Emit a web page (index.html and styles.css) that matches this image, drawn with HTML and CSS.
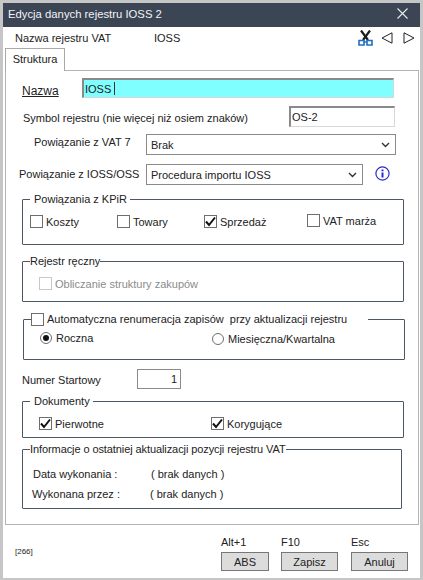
FILE: index.html
```html
<!DOCTYPE html>
<html lang="pl">
<head>
    <meta charset="UTF-8">
    <title>Edycja danych rejestru IOSS 2</title>
    <link rel="stylesheet" href="styles.css">
</head>
<body>
    <div class="window">
        <div class="titleBar">
            <span>Edycja danych rejestru IOSS 2</span>
            <svg class="closeIcon" width="11" height="11" viewBox="0 0 11 11"><path d="M0.5 0.5L10.5 10.5M10.5 0.5L0.5 10.5" stroke="#e8eaee" stroke-width="1.1" fill="none"/></svg>
        </div>
        <div class="toolBar">
            <span class="toolName">Nazwa rejestru VAT</span>
            <span class="toolValue">IOSS</span>
            <svg class="toolIcon" width="15" height="16" viewBox="0 0 15 16"><path d="M3 0.5L10 10M12 0.5L5 10" stroke="#1c1c1c" stroke-width="2.2" fill="none"/><path d="M1 10.5h5v4.5h-5zM9 10.5h5v4.5h-5z" stroke="#1f6fc0" stroke-width="1.6" fill="none"/><path d="M6 12h3" stroke="#1f6fc0" stroke-width="1.4"/></svg>
            <svg class="arrowLeft" width="12" height="12" viewBox="0 0 12 12"><path d="M11 0.8V11.2L1 6Z" stroke="#222" fill="none"/></svg>
            <svg class="arrowRight" width="12" height="12" viewBox="0 0 12 12"><path d="M1 0.8V11.2L11 6Z" stroke="#222" fill="none"/></svg>
        </div>
        <div class="tabs"><span class="tab">Struktura</span></div>
        <div class="panel">
            <div class="row rowName">
                <span class="nameLabel">Nazwa</span>
                <div class="field fieldName">IOSS <i class="caret"></i></div>
            </div>
            <div class="row rowSymbol">
                <span class="symbolLabel">Symbol rejestru (nie więcej niż osiem znaków)</span>
                <div class="field fieldSymbol">OS-2</div>
            </div>
            <div class="row rowVat">
                <span class="vatLabel">Powiązanie z VAT 7</span>
                <div class="select selectVat">Brak
                    <svg width="9" height="6" viewBox="0 0 9 6"><path d="M1 1L4.5 4.5L8 1" stroke="#333" stroke-width="1.4" fill="none"/></svg>
                </div>
            </div>
            <div class="row rowIoss">
                <span class="iossLabel">Powiązanie z IOSS/OSS</span>
                <div class="select selectIoss">Procedura importu IOSS
                    <svg width="9" height="6" viewBox="0 0 9 6"><path d="M1 1L4.5 4.5L8 1" stroke="#333" stroke-width="1.4" fill="none"/></svg>
                </div>
                <svg class="infoIcon" width="15" height="15" viewBox="0 0 15 15"><circle cx="7.5" cy="7.5" r="6.6" stroke="#2a2ad0" stroke-width="1.2" fill="#fff"/><path d="M7.5 3.4v1.8M7.5 6.4v5" stroke="#2a2ad0" stroke-width="2" fill="none"/></svg>
            </div>

            <fieldset class="group groupKpir">
                <legend class="legendGap">Powiązania z KPiR</legend>
                <div class="checks">
                    <label class="check checkKoszty"><i class="box"></i>Koszty</label>
                    <label class="check checkTowary"><i class="box"></i>Towary</label>
                    <label class="check checkSprzedaz"><i class="box">
                        <svg width="11" height="11" viewBox="0 0 11 11"><path d="M1 5.5L4 9L10 1.5" stroke="#111" stroke-width="2" fill="none"/></svg>
                    </i>Sprzedaż</label>
                    <label class="check checkMarza"><i class="box"></i>VAT marża</label>
                </div>
            </fieldset>

            <fieldset class="group groupManual">
                <legend class="legendTight">Rejestr ręczny</legend>
                <label class="check disabled"><i class="box"></i>Obliczanie struktury zakupów</label>
            </fieldset>

            <fieldset class="group groupAuto">
                <legend class="legendAuto">
                    <label class="check"><i class="box"></i>Automatyczna renumeracja zapisów&nbsp; przy aktualizacji rejestru</label>
                </legend>
                <div class="radios">
                    <label class="check radioYear"><i class="radio on"></i>Roczna</label>
                    <label class="check radioMonth"><i class="radio"></i>Miesięczna/Kwartalna</label>
                </div>
            </fieldset>

            <div class="row rowStart">
                <span class="startLabel">Numer Startowy</span>
                <div class="field fieldStart">1</div>
            </div>

            <fieldset class="group groupDocs">
                <legend class="legendGap">Dokumenty</legend>
                <div class="docs">
                    <label class="check checkFirst"><i class="box">
                        <svg width="11" height="11" viewBox="0 0 11 11"><path d="M1 5.5L4 9L10 1.5" stroke="#111" stroke-width="2" fill="none"/></svg>
                    </i>Pierwotne</label>
                    <label class="check"><i class="box">
                        <svg width="11" height="11" viewBox="0 0 11 11"><path d="M1 5.5L4 9L10 1.5" stroke="#111" stroke-width="2" fill="none"/></svg>
                    </i>Korygujące</label>
                </div>
            </fieldset>

            <fieldset class="group groupInfo">
                <legend class="legendTight">Informacje o ostatniej aktualizacji pozycji rejestru VAT</legend>
                <div class="infoRow infoDate"><span class="infoKey">Data wykonania :</span><span>( brak danych )</span></div>
                <div class="infoRow infoUser"><span class="infoKey">Wykonana przez :</span><span>( brak danych )</span></div>
            </fieldset>
        </div>
        <div class="footer">
            <span class="code">[266]</span>
            <div class="action actionAbs"><span>Alt+1</span><button>ABS</button></div>
            <div class="action actionSave"><span>F10</span><button>Zapisz</button></div>
            <div class="action actionCancel"><span>Esc</span><button>Anuluj</button></div>
        </div>
    </div>
</body>
</html>
```

FILE: styles.css
```css
* {
    margin: 0;
    padding: 0;
    box-sizing: border-box;
}

html, body {
    width: 423px;
    height: 580px;
    overflow: hidden;
    background: #c6c6c6;
}

body {
    font-family: "Liberation Sans", Arial, sans-serif;
    font-size: 11px;
    color: #222;
}

i {
    font-style: normal;
}

.window {
    width: 417px;
    height: 575px;
    margin: 3px 0 0 3px;
    background: #fff;
    display: flex;
    flex-direction: column;
}

.titleBar {
    height: 24px;
    flex: none;
    display: flex;
    align-items: center;
    justify-content: space-between;
    padding: 0 12px 3px 5px;
    background: #3b4554;
    color: #f2f4f6;
    font-size: 11.3px;
}

.toolBar {
    height: 21px;
    flex: none;
    display: flex;
    align-items: center;
    padding-left: 12px;
}

.toolName {
    width: 139px;
}

.toolValue {
    width: 204px;
}

.arrowLeft {
    margin-left: 8px;
}

.arrowRight {
    margin-left: 10px;
}

.tabs {
    height: 22px;
    flex: none;
    margin-left: 2px;
    display: flex;
}

.tab {
    width: 60px;
    height: 23px;
    padding-top: 4px;
    text-align: center;
    background: #fff;
    border: 1px solid #a9a9a9;
    border-bottom: 0;
    position: relative;
    z-index: 1;
}

.panel {
    height: 455px;
    flex: none;
    margin: 0 1px 0 2px;
    padding-top: 7px;
    border: 1px solid #b4b4b4;
}

.row {
    display: flex;
    align-items: center;
}

.field, .select {
    display: flex;
    align-items: center;
    border: 1px solid #8a8a8a;
    background: #fff;
}

.rowName {
    height: 20px;
    padding-left: 16px;
}

.nameLabel {
    width: 60px;
    margin-top: 5px;
    font-size: 12px;
    text-decoration: underline;
}

.fieldName {
    width: 312px;
    height: 20px;
    padding-left: 1px;
    background: #7fffff;
    border-color: #8a8a8a #d8d8d8 #d8d8d8 #8a8a8a;
    border-width: 2px 1px 1px 2px;
}

.caret {
    display: inline-block;
    width: 1px;
    height: 13px;
    margin-left: 3px;
    background: #333;
}

.rowSymbol {
    height: 21px;
    margin-top: 8px;
    padding-left: 17px;
}

.symbolLabel {
    width: 266px;
    margin-top: 2px;
}

.fieldSymbol {
    width: 106px;
    height: 21px;
    padding-left: 1px;
    border-color: #8a8a8a #d8d8d8 #d8d8d8 #8a8a8a;
    border-width: 2px 1px 1px 2px;
}

.rowVat {
    height: 21px;
    margin-top: 7px;
    padding-left: 28px;
}

.vatLabel {
    width: 112px;
    margin-top: -5px;
}

.select {
    height: 21px;
    justify-content: space-between;
    padding: 0 5px 0 4px;
}

.selectVat {
    width: 250px;
}

.rowIoss {
    height: 21px;
    margin-top: 9px;
    padding-left: 13px;
}

.iossLabel {
    width: 127px;
    margin-top: -1px;
}

.selectIoss {
    width: 217px;
}

.infoIcon {
    margin: -3px 0 0 12px;
}

.group {
    display: block;
    margin-left: 16px;
    width: 382px;
    border: 1px solid #4d5663;
    border-radius: 1px;
}

.group legend {
    margin-left: 7px;
    line-height: 14px;
}

.legendGap {
    padding: 0 3px 0 4px;
}

.legendTight {
    padding: 0;
}

.legendAuto {
    padding: 0 21px 0 0;
    margin-left: 10px;
}

.check {
    display: flex;
    align-items: center;
    white-space: nowrap;
}

.box {
    width: 13px;
    height: 13px;
    flex: none;
    margin-right: 3px;
    display: flex;
    align-items: center;
    justify-content: center;
    border: 1px solid #6e6e6e;
    background: #fff;
}

.radio {
    width: 12px;
    height: 12px;
    flex: none;
    margin-right: 4px;
    border: 1px solid #6e6e6e;
    border-radius: 50%;
    background: #fff;
    display: flex;
    align-items: center;
    justify-content: center;
}

.radio.on::after {
    content: "";
    width: 6px;
    height: 6px;
    border-radius: 50%;
    background: #111;
}

.disabled {
    color: #8c8c8c;
}

.disabled .box {
    border-color: #c8c8c8;
}

.groupKpir {
    margin-top: 7px;
    height: 53px;
}

.checks {
    display: flex;
    padding: 9px 0 0 7px;
}

.checkKoszty, .checkTowary {
    width: 87px;
}

.checkSprzedaz {
    width: 103px;
}

.checkMarza {
    margin-top: -2px;
}

.groupManual {
    margin-top: 9px;
    height: 48px;
}

.groupManual .check {
    padding: 9px 0 0 16px;
}

.groupAuto {
    margin-top: 10px;
    margin-left: 17px;
    height: 48px;
}

.radios {
    display: flex;
    padding: 5px 0 0 16px;
}

.radioYear {
    width: 172px;
}

.radioMonth {
    margin-top: 2px;
}

.rowStart {
    height: 20px;
    margin-top: 9px;
    padding-left: 16px;
}

.startLabel {
    width: 115px;
    margin-top: 1px;
}

.fieldStart {
    width: 44px;
    height: 20px;
    justify-content: flex-end;
    padding-right: 3px;
}

.groupDocs {
    margin-top: 5px;
    height: 44px;
}

.docs {
    display: flex;
    padding: 9px 0 0 16px;
}

.checkFirst {
    width: 172px;
}

.groupInfo {
    margin-top: 4px;
    width: 380px;
    height: 67px;
}

.groupInfo legend {
    letter-spacing: -0.09px;
}

.infoRow {
    display: flex;
}

.infoKey {
    width: 118px;
}

.infoDate {
    padding: 12px 0 0 10px;
}

.infoUser {
    padding: 8px 0 0 9px;
}

.footer {
    flex: 1;
    display: flex;
    padding: 11px 0 0 12px;
}

.code {
    width: 206px;
    padding-top: 11px;
    font-size: 8px;
}

.action {
    display: flex;
    flex-direction: column;
    gap: 4px;
}

.action button {
    height: 19px;
    font: inherit;
    color: #222;
    background: #dcdcdc;
    border: 1px solid #777;
}

.actionAbs {
    width: 60px;
}

.actionAbs button {
    width: 48px;
}

.actionSave {
    width: 70px;
}

.actionSave button, .actionCancel button {
    width: 57px;
}
```
